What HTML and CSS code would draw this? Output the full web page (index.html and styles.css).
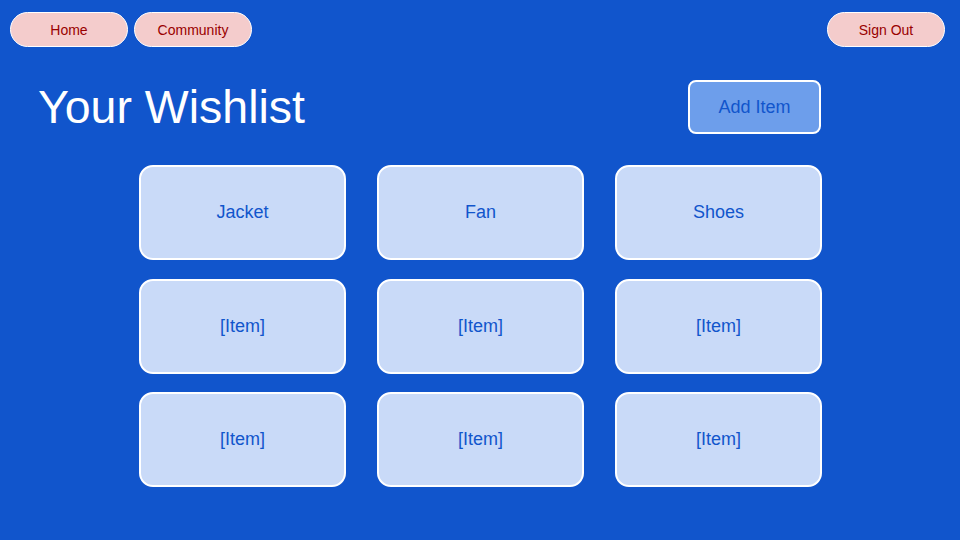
FILE: index.html
```html
<!DOCTYPE html>
<html lang="en">
<head>
<meta charset="utf-8">
<title>Your Wishlist</title>
<link rel="stylesheet" href="styles.css">
</head>
<body>
<nav class="nav">
  <div class="nav-left">
    <a class="pill">Home</a>
    <a class="pill">Community</a>
  </div>
  <a class="pill">Sign Out</a>
</nav>
<main class="main">
  <header class="header">
    <h1 class="title">Your Wishlist</h1>
    <button class="add-btn">Add Item</button>
  </header>
  <section class="grid">
    <div class="card">Jacket</div>
    <div class="card">Fan</div>
    <div class="card">Shoes</div>
    <div class="card">[Item]</div>
    <div class="card">[Item]</div>
    <div class="card">[Item]</div>
    <div class="card">[Item]</div>
    <div class="card">[Item]</div>
    <div class="card">[Item]</div>
  </section>
</main>
</body>
</html>
```
FILE: styles.css
```css
html, body {
  margin: 0;
  padding: 0;
}
body {
  width: 960px;
  height: 540px;
  background: #1155cc;
  font-family: "Liberation Sans", Arial, sans-serif;
  overflow: hidden;
}
.nav {
  display: flex;
  justify-content: space-between;
  align-items: center;
  padding: 12px 15px 0 10px;
}
.nav-left {
  display: flex;
  gap: 6px;
}
.pill {
  box-sizing: border-box;
  width: 118px;
  height: 35px;
  display: flex;
  align-items: center;
  justify-content: center;
  background: #f4cccc;
  border: 1px solid #ffffff;
  border-radius: 18px;
  color: #990000;
  font-size: 14px;
}
.main {
  padding: 33px 0 0 38px;
}
.header {
  display: flex;
  justify-content: space-between;
  align-items: center;
  width: 783px;
}
.title {
  margin: 0;
  font-weight: normal;
  font-size: 46.5px;
  line-height: 53px;
  color: #ffffff;
}
.add-btn {
  box-sizing: border-box;
  width: 133px;
  height: 54px;
  background: #6d9eeb;
  border: 2px solid #ffffff;
  border-radius: 8px;
  color: #1155cc;
  font-family: inherit;
  font-size: 18px;
  padding: 0;
}
.grid {
  margin: 31px 0 0 101px;
  width: 683px;
  display: grid;
  grid-template-columns: repeat(3, 1fr);
  grid-auto-rows: 95px;
  column-gap: 31px;
  row-gap: 18.5px;
}
.card {
  box-sizing: border-box;
  display: flex;
  align-items: center;
  justify-content: center;
  background: #c9daf8;
  border: 2px solid #ffffff;
  border-radius: 14px;
  color: #1155cc;
  font-size: 18px;
}
```
